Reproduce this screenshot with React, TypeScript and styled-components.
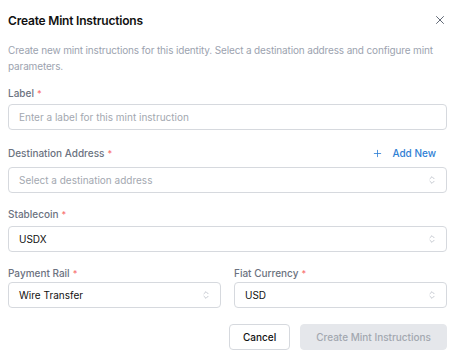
import React from "react";
import styled, { createGlobalStyle } from "styled-components";
import { X, Plus, ChevronsUpDown } from "lucide-react";

const GlobalStyle = createGlobalStyle`
    html, body {
        margin: 0;
        padding: 0;
        background: #fff;
    }
    body {
        font-family: Inter, "Noto Sans", sans-serif;
        color: #111827;
    }
`;

const Dialog = styled.div`
    width: 456px;
    box-sizing: border-box;
    padding: 11px 9px 8px 8px;
`;

const Header = styled.div`
    display: flex;
    align-items: center;
    justify-content: space-between;
    height: 18px;
`;

const Title = styled.h2`
    margin: 0;
    font-size: 12px;
    font-weight: 600;
    color: #111;
    letter-spacing: -0.2px;
`;

const CloseButton = styled.button`
    display: flex;
    align-items: center;
    justify-content: center;
    border: none;
    background: none;
    padding: 0;
    margin-right: 0;
    color: #4b5563;
    cursor: pointer;
`;

const Description = styled.p`
    margin: 13px 0 0;
    font-size: 10px;
    line-height: 16px;
    letter-spacing: -0.15px;
    color: #9ca3af;
`;

const Field = styled.div<{ $top: number }>`
    display: flex;
    flex-direction: column;
    margin-top: ${(p) => p.$top}px;
    min-width: 0;
`;

const LabelRow = styled.div<{ $gap: number }>`
    display: flex;
    align-items: center;
    justify-content: space-between;
    height: 14px;
    margin-bottom: ${(p) => p.$gap}px;
`;

const Label = styled.label`
    font-size: 10px;
    font-weight: 500;
    color: #6b7280;
`;

const Required = styled.span`
    color: #f87171;
    margin-left: 3px;
    font-size: 9px;
`;

const AddNew = styled.button`
    display: flex;
    align-items: center;
    gap: 9px;
    border: none;
    background: none;
    padding: 0;
    margin-right: 11px;
    font-family: inherit;
    font-size: 10px;
    font-weight: 500;
    color: #2f80d4;
    cursor: pointer;
`;

const Box = styled.div<{ $muted?: boolean }>`
    display: flex;
    align-items: center;
    justify-content: space-between;
    height: 26px;
    box-sizing: border-box;
    border: 1px solid #d6d9de;
    border-radius: 4px;
    padding: 0 9px 0 10px;
    font-size: 10px;
    color: ${(p) => (p.$muted ? "#a3a8b0" : "#111")};
    background: #fff;
`;

const Chevron = styled(ChevronsUpDown)`
    color: #9ca3af;
    flex-shrink: 0;
`;

const Row = styled.div`
    display: grid;
    grid-template-columns: 1fr 1fr;
    gap: 13px;
`;

const Footer = styled.div`
    display: flex;
    justify-content: flex-end;
    gap: 10px;
    margin-top: 16px;
`;

const Button = styled.button<{ $primary?: boolean }>`
    height: 26px;
    box-sizing: border-box;
    border-radius: 4px;
    padding: 0 ${(p) => (p.$primary ? 15 : 13)}px;
    font-family: inherit;
    font-size: 10px;
    font-weight: 500;
    border: 1px solid ${(p) => (p.$primary ? "#e5e7eb" : "#d6d9de")};
    background: ${(p) => (p.$primary ? "#e5e7eb" : "#fff")};
    color: ${(p) => (p.$primary ? "#a3a8b0" : "#111")};
`;

const SelectBox: React.FC<{ value?: string; placeholder?: string }> = ({
    value,
    placeholder,
}) => (
    <Box $muted={!value}>
        <span>{value ?? placeholder}</span>
        <Chevron size={10} strokeWidth={1.4} />
    </Box>
);

export default function App() {
    return (
        <>
            <GlobalStyle />
            <Dialog>
                <Header>
                    <Title>Create Mint Instructions</Title>
                    <CloseButton aria-label="Close">
                        <X size={14} strokeWidth={1.5} />
                    </CloseButton>
                </Header>
                <Description>
                    Create new mint instructions for this identity. Select a
                    destination address and configure mint parameters.
                </Description>

                <Field $top={12}>
                    <LabelRow $gap={4}>
                        <Label>
                            Label<Required>*</Required>
                        </Label>
                    </LabelRow>
                    <Box $muted>Enter a label for this mint instruction</Box>
                </Field>

                <Field $top={16}>
                    <LabelRow $gap={7}>
                        <Label>
                            Destination Address<Required>*</Required>
                        </Label>
                        <AddNew>
                            <Plus size={11} strokeWidth={1.8} />
                            Add New
                        </AddNew>
                    </LabelRow>
                    <SelectBox placeholder="Select a destination address" />
                </Field>

                <Field $top={14}>
                    <LabelRow $gap={5}>
                        <Label>
                            Stablecoin<Required>*</Required>
                        </Label>
                    </LabelRow>
                    <SelectBox value="USDX" />
                </Field>

                <Row>
                    <Field $top={14}>
                        <LabelRow $gap={2}>
                            <Label>
                                Payment Rail<Required>*</Required>
                            </Label>
                        </LabelRow>
                        <SelectBox value="Wire Transfer" />
                    </Field>
                    <Field $top={14}>
                        <LabelRow $gap={2}>
                            <Label>
                                Fiat Currency<Required>*</Required>
                            </Label>
                        </LabelRow>
                        <SelectBox value="USD" />
                    </Field>
                </Row>

                <Footer>
                    <Button>Cancel</Button>
                    <Button $primary>Create Mint Instructions</Button>
                </Footer>
            </Dialog>
        </>
    );
}
